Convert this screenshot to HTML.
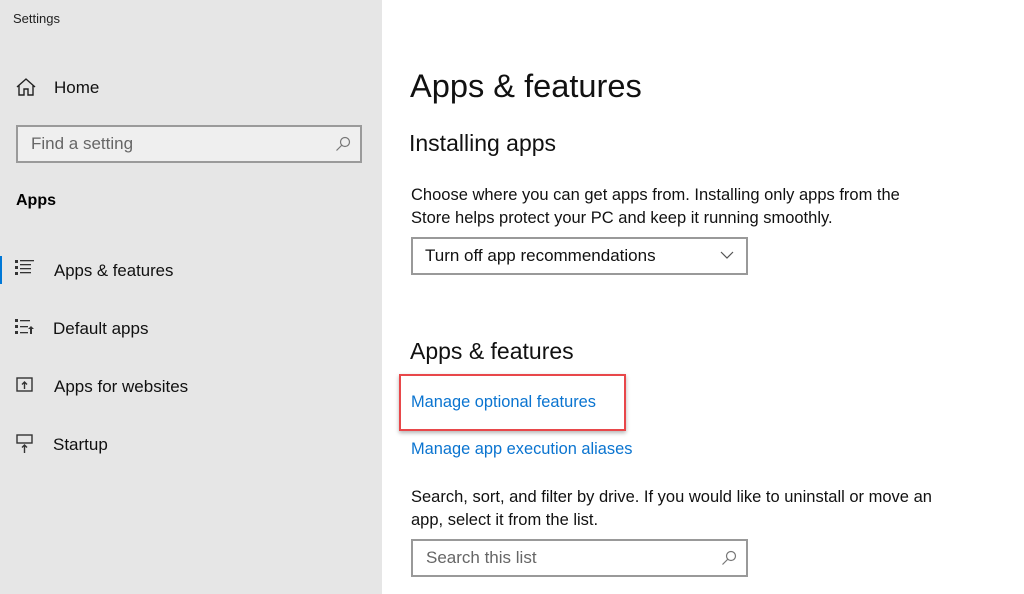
<!DOCTYPE html>
<html><head><style>
*{margin:0;padding:0;box-sizing:border-box}
body{width:1024px;height:594px;overflow:hidden;background:#fff;font-family:"Liberation Sans",sans-serif;position:relative;color:#000}
.side{position:absolute;left:0;top:0;width:382px;height:594px;background:#e6e6e6}
.a{position:absolute;white-space:nowrap}
.box{position:absolute;border:2px solid #999}
.nav{font-size:16px;color:#111}
.ic{position:absolute}
.link{color:#0a74d0;font-size:16.4px}
</style></head><body>
<div class="side">
<div class="a" style="left:13px;top:11px;font-size:13px;color:#222">Settings</div>
<svg class="ic" style="left:16px;top:78px" width="20" height="18" viewBox="0 0 20 18" fill="none" stroke="#222" stroke-width="1.4"><path d="M1 9 L10 1 L19 9 M3 7 V17 H8 V11 H12 V17 H17 V7"/></svg>
<div class="a nav" style="left:54px;top:78px;font-size:17px">Home</div>
<div class="box" style="left:16px;top:125px;width:346px;height:38px;background:#efefef;border-color:#9a9a9a"></div>
<div class="a" style="left:31px;top:134px;font-size:17px;color:#666">Find a setting</div>
<svg class="ic" style="left:335px;top:136px" width="16" height="16" viewBox="0 0 16 16" fill="none" stroke="#777" stroke-width="1.2"><circle cx="10" cy="6" r="4.5"/><path d="M7 9 L1.5 14.5"/></svg>
<div class="a" style="left:16px;top:192px;font-size:16px;font-weight:bold">Apps</div>
<div class="a" style="left:0;top:256px;width:2px;height:28px;background:#0078d7"></div>
<svg class="ic" style="left:15px;top:259px" width="20" height="18" viewBox="0 0 20 18" fill="#333"><rect x="0" y="1" width="3" height="3"/><rect x="0" y="7" width="3" height="3"/><rect x="0" y="13" width="3" height="3"/><rect x="5" y="1" width="14" height="1.3"/><rect x="5" y="5" width="11" height="1.3"/><rect x="5" y="9" width="11" height="1.3"/><rect x="5" y="13" width="11" height="1.3"/></svg>
<div class="a nav" style="left:54px;top:261px;font-size:16.8px">Apps &amp; features</div>
<svg class="ic" style="left:15px;top:318px" width="20" height="18" viewBox="0 0 20 18" fill="#333"><rect x="0" y="1" width="3" height="3"/><rect x="0" y="7" width="3" height="3"/><rect x="0" y="13" width="3" height="3"/><rect x="5" y="2" width="10" height="1.3"/><rect x="5" y="8" width="8" height="1.3"/><rect x="5" y="14" width="8" height="1.3"/><path d="M16 8 L19 11 H17 V16 H15 V11 H13Z"/></svg>
<div class="a nav" style="left:53px;top:319px;font-size:17px">Default apps</div>
<svg class="ic" style="left:16px;top:377px" width="18" height="16" viewBox="0 0 18 16" fill="none" stroke="#333" stroke-width="1.4"><rect x="1" y="1" width="15" height="13"/><path d="M8.5 12 V5 M6 7.5 L8.5 5 L11 7.5"/></svg>
<div class="a nav" style="left:54px;top:377px;font-size:17px">Apps for websites</div>
<svg class="ic" style="left:16px;top:434px" width="18" height="20" viewBox="0 0 18 20" fill="none" stroke="#333" stroke-width="1.4"><rect x="1" y="1" width="15" height="8"/><path d="M8.5 19 V11 M6 13.5 L8.5 11 L11 13.5"/></svg>
<div class="a nav" style="left:53px;top:435px;font-size:17px">Startup</div>
</div>
<div class="a" style="left:410px;top:67px;font-size:32.6px;color:#111">Apps &amp; features</div>
<div class="a" style="left:409px;top:130px;font-size:23px;color:#111">Installing apps</div>
<div class="a" style="left:411px;top:184px;font-size:16.5px;line-height:23px;color:#111">Choose where you can get apps from. Installing only apps from the<br>Store helps protect your PC and keep it running smoothly.</div>
<div class="box" style="left:411px;top:237px;width:337px;height:38px"></div>
<div class="a" style="left:425px;top:246px;font-size:17px;color:#111">Turn off app recommendations</div>
<svg class="ic" style="left:720px;top:250px" width="14" height="10" viewBox="0 0 14 10" fill="none" stroke="#555" stroke-width="1.2"><path d="M1 2 L7 8 L13 2"/></svg>
<div class="a" style="left:410px;top:338px;font-size:23px;color:#111">Apps &amp; features</div>
<div class="a" style="left:399px;top:374px;width:227px;height:57px;border:2px solid #e8474a;box-shadow:0 2px 4px rgba(0,0,0,.3)"></div>
<div class="a link" style="left:411px;top:393px">Manage optional features</div>
<div class="a link" style="left:411px;top:440px">Manage app execution aliases</div>
<div class="a" style="left:411px;top:486px;font-size:16.5px;line-height:23px;color:#111">Search, sort, and filter by drive. If you would like to uninstall or move an<br>app, select it from the list.</div>
<div class="box" style="left:411px;top:539px;width:337px;height:38px"></div>
<div class="a" style="left:426px;top:548px;font-size:17px;color:#666">Search this list</div>
<svg class="ic" style="left:721px;top:550px" width="16" height="16" viewBox="0 0 16 16" fill="none" stroke="#777" stroke-width="1.2"><circle cx="10" cy="6" r="4.5"/><path d="M7 9 L1.5 14.5"/></svg>
</body></html>
